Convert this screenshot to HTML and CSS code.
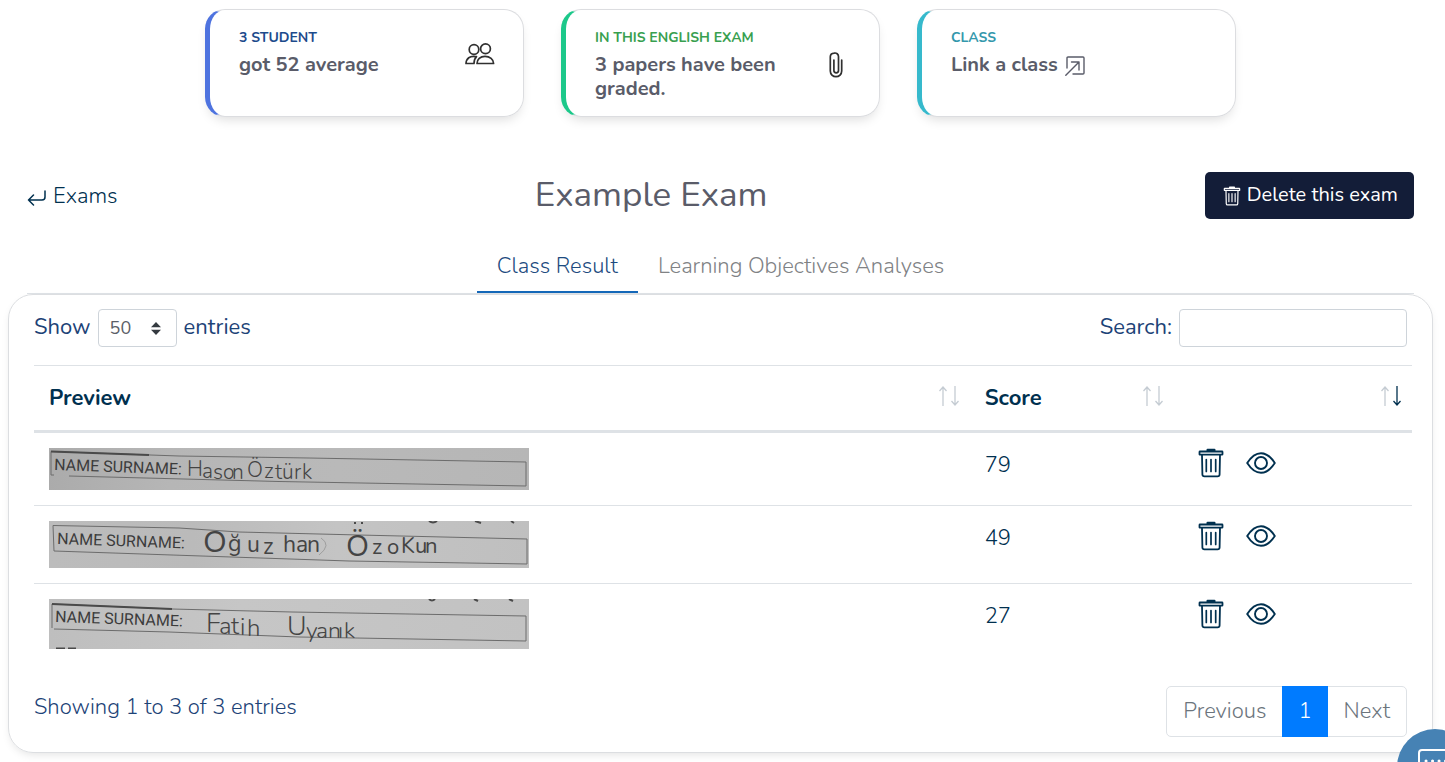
FILE: index.html
```html
<!DOCTYPE html>
<html lang="en">
<head>
<meta charset="utf-8">
<title>Example Exam</title>
<link rel="stylesheet" href="styles.css">
</head>
<body>
<svg class="defs" aria-hidden="true">
  <symbol id="trash" viewBox="0 0 26 30">
    <g fill="none" stroke="currentColor" stroke-width="1.8" stroke-linejoin="round" stroke-linecap="round">
      <path d="M9.500 2.800V1.800h7v1z" stroke-width="2"/>
      <rect x="1.500" y="3.500" width="23" height="3.200" rx=".5"/>
      <path d="M4 7l.4 19.500q.1 1.900 2 1.900h13.200q1.900 0 2-1.900L22 7"/>
      <path d="M8.300 11.500v12M13 11.500v12M17.700 11.500v12" stroke-width="1.700"/>
    </g>
  </symbol>
  <symbol id="eye" viewBox="0 0 30 22">
    <g fill="none" stroke="currentColor" stroke-width="1.900" stroke-linejoin="round">
      <path d="M1.200 11Q7.500 1.200 15 1.200T28.800 11Q22.500 20.800 15 20.800T1.200 11z"/>
      <circle cx="15" cy="11" r="6"/>
    </g>
  </symbol>
  <symbol id="up" viewBox="0 0 8 20">
    <path d="M4 20V1M0.500 5 4 1l3.500 4" fill="none" stroke="currentColor" stroke-width="1.300"/>
  </symbol>
  <symbol id="down" viewBox="0 0 8 20">
    <path d="M4 0v19M0.500 15 4 19l3.500-4" fill="none" stroke="currentColor" stroke-width="1.300"/>
  </symbol>
</svg>

<section class="stats">
  <article class="stat stat-blue">
    <div class="stat-text">
      <h2>3 STUDENT</h2>
      <p>got 52 average</p>
    </div>
    <svg class="icon-people" viewBox="0 0 30 22" fill="none" stroke="currentColor" stroke-width="1.700" stroke-linejoin="round">
      <circle cx="9" cy="6.500" r="4.800"/>
      <circle cx="20.500" cy="5.800" r="4.900"/>
      <path d="M12 20.500c0-4 3.200-7.200 8-7.200s8.600 3.200 8.600 7.200z"/>
      <path d="M10.500 13.600C5 12.600 1.200 15.500 1 20.500h8c0-2.800.5-4.900 2.500-6.900z"/>
    </svg>
  </article>
  <article class="stat stat-green">
    <div class="stat-text">
      <h2>IN THIS ENGLISH EXAM</h2>
      <p>3 papers have been graded.</p>
    </div>
    <svg class="icon-clip" viewBox="0 0 14 26" fill="none" stroke="currentColor" stroke-width="1.700" stroke-linecap="round">
      <path d="M9.500 8v10.500a2.300 2.300 0 0 1-4.600 0V8M9.500 8V4.500a3.500 3.500 0 0 0-4.300-3.400C2.700 1.300 1.300 2.500 1.300 4.800V19a5.700 5.700 0 0 0 11.400 0V8"/>
    </svg>
  </article>
  <article class="stat stat-teal">
    <div class="stat-text">
      <h2>CLASS</h2>
      <p>Link a class
        <svg class="icon-link" viewBox="0 0 20 20" fill="none" stroke="currentColor" stroke-width="1.400" stroke-linecap="round" stroke-linejoin="round">
          <path d="M2 12V2q0-1 1-1h15q1 0 1 1v15q0 1-1 1H8M.800 19.200 14 6M6.500 6H14v8"/>
        </svg>
      </p>
    </div>
  </article>
</section>

<header class="exam-head">
  <a class="back" href="#">
    <svg class="icon-back" viewBox="0 0 20 16" fill="none" stroke="currentColor" stroke-width="1.500" stroke-linecap="round" stroke-linejoin="round">
      <path d="M18 1v6q0 3-3 3H1.500M6.500 5l-5 5 5 5"/>
    </svg>
    Exams
  </a>
  <h1>Example Exam</h1>
  <button class="delete" type="button">
    <svg class="icon-delete"><use href="#trash"/></svg>
    Delete this exam
  </button>
</header>

<nav class="tabs">
  <a class="tab active" href="#">Class Result</a>
  <a class="tab" href="#">Learning Objectives Analyses</a>
</nav>

<main class="panel">
  <div class="tools">
    <label class="length"><span class="caption">Show</span>
      <span class="select">
        <select><option>50</option></select>
        <svg viewBox="0 0 10 13" fill="#343a40"><path d="M0 5.200 5 0l5 5.200zM0 7.800h10L5 13z"/></svg>
      </span>
      <span class="caption">entries</span>
    </label>
    <label class="search"><span class="caption">Search:</span> <input type="search"></label>
  </div>

  <table>
    <colgroup><col class="col-preview"><col class="col-score"><col class="col-actions"></colgroup>
    <thead>
      <tr>
        <th><div class="sort">Preview <span class="arrows"><svg><use href="#up"/></svg><svg><use href="#down"/></svg></span></div></th>
        <th><div class="sort">Score <span class="arrows"><svg><use href="#up"/></svg><svg><use href="#down"/></svg></span></div></th>
        <th><div class="sort"><span class="arrows"><svg><use href="#up"/></svg><svg class="on"><use href="#down"/></svg></span></div></th>
      </tr>
    </thead>
    <tbody>
      <tr>
        <td>
          <svg class="scan" viewBox="0 0 480 42" width="480" height="42">
            <defs><linearGradient id="paper1"><stop offset="0" stop-color="#ababab"/><stop offset=".25" stop-color="#b6b6b6"/><stop offset=".6" stop-color="#b9b9b9"/><stop offset="1" stop-color="#b6b6b6"/></linearGradient></defs>
            <rect width="480" height="42" fill="url(#paper1)"/>
            <path class="rule" d="M5 27 2 27V3.500L130 8l130 2 217 4v24L230 33.500 20 28"/>
            <path class="rule dark" d="M2 3.500 100 7"/>
            <text class="print" x="5" y="22" transform="rotate(2 5 22)">NAME SURNAME:</text>
            <text class="hand" font-size="21" x="138 153 164 174 183" y="28 30 31 31 31">Hason</text>
            <text class="hand" font-size="21" x="198 215 226 233 245 253" y="29 30 31 31 31 31">Öztürk</text>
          </svg>
        </td>
        <td>79</td>
        <td><div class="actions">
          <button type="button" aria-label="Delete"><svg class="icon-trash"><use href="#trash"/></svg></button>
          <button type="button" aria-label="View"><svg class="icon-eye"><use href="#eye"/></svg></button>
        </div></td>
      </tr>
      <tr>
        <td>
          <svg class="scan" viewBox="0 0 480 47" width="480" height="47">
            <defs><linearGradient id="paper2"><stop offset="0" stop-color="#bcbcbc"/><stop offset=".3" stop-color="#bababa"/><stop offset=".6" stop-color="#c4c4c4"/><stop offset="1" stop-color="#bfbfbf"/></linearGradient></defs>
            <rect width="480" height="47" fill="url(#paper2)"/>
            <path class="rule" d="M4 4.500 130 7l60 4 120 3 168 4v25L300 40 5 30z"/>
            <path class="rule dark" d="M306 1v2M313 1v2M380 0q4 3 8 0M426 0l6 2M462 0l3 2"/>
            <path class="faint" d="M272 17q11 7-2 17"/>
            <text class="print" x="8" y="23" transform="rotate(2 8 23)">NAME SURNAME:</text>
            <text class="hand bold" x="154 179 198 214 234 247 258" y="31 30 31 33 31 31 31"><tspan font-size="31">O</tspan><tspan font-size="23">ğuzhan</tspan></text>
            <text class="hand bold" x="297 323 338 352 366 376" y="35 33 33 32 32 32"><tspan font-size="30">Ö</tspan><tspan font-size="22">zoKun</tspan></text>
          </svg>
        </td>
        <td>49</td>
        <td><div class="actions">
          <button type="button" aria-label="Delete"><svg class="icon-trash"><use href="#trash"/></svg></button>
          <button type="button" aria-label="View"><svg class="icon-eye"><use href="#eye"/></svg></button>
        </div></td>
      </tr>
      <tr>
        <td>
          <svg class="scan" viewBox="0 0 480 50" width="480" height="50">
            <defs><linearGradient id="paper3"><stop offset="0" stop-color="#bebebe"/><stop offset=".4" stop-color="#c6c6c6"/><stop offset="1" stop-color="#c2c2c2"/></linearGradient></defs>
            <rect width="480" height="50" fill="url(#paper3)"/>
            <path class="rule" d="M3 29V5l120 5 120 3 234 4v25L250 38 120 33 5 30"/>
            <path class="rule dark" d="M3 5 123 10M7 49.500h9M19 49.500h8M380 0q3 3 6 0M425 0l4 2M460 0l4 2"/>
            <text class="print" x="6" y="23" transform="rotate(2 6 23)">NAME SURNAME:</text>
            <text class="hand" x="157 170 182 191 198" y="33 35 35 36 37"><tspan font-size="27">F</tspan><tspan font-size="24">atih</tspan></text>
            <text class="hand" x="238 257 267 279 289 295" y="36 39 39 39 39 39"><tspan font-size="27">U</tspan><tspan font-size="23">yanık</tspan></text>
          </svg>
        </td>
        <td>27</td>
        <td><div class="actions">
          <button type="button" aria-label="Delete"><svg class="icon-trash"><use href="#trash"/></svg></button>
          <button type="button" aria-label="View"><svg class="icon-eye"><use href="#eye"/></svg></button>
        </div></td>
      </tr>
    </tbody>
  </table>

  <footer class="foot">
    <p>Showing 1 to 3 of 3 entries</p>
    <nav class="pager">
      <a href="#">Previous</a>
      <a class="current" href="#">1</a>
      <a href="#">Next</a>
    </nav>
  </footer>
</main>

<button class="chat" type="button" aria-label="Chat">
  <svg viewBox="0 0 34 30" fill="none" stroke="#fff" stroke-width="2" stroke-linejoin="round" stroke-linecap="round">
    <path d="M4 1h26q3 0 3 3v16q0 3-3 3H18l-6 6v-6H4q-3 0-3-3V4q0-3 3-3z"/>
    <path d="M8 12h.1M14.500 12h.1M21 12h.1M27.500 12h.1" stroke-width="3"/>
  </svg>
</button>
</body>
</html>
```

FILE: styles.css
```css
* { box-sizing: border-box; }

body {
  margin: 0;
  padding: 9px 12px 9px 8px;
  background: #fff;
  color: #00304f;
  font-family: "Nunito", "Open Sans", sans-serif;
  font-size: 22px;
  font-weight: 300;
  line-height: 34px;
}

h1, h2, p { margin: 0; }
a { color: inherit; text-decoration: none; }
button { border: 0; padding: 0; background: none; color: inherit; font: inherit; }
svg { display: block; }
.defs { position: absolute; width: 0; height: 0; }

.stats {
  display: grid;
  grid-template-columns: repeat(3, 1fr);
  gap: 37px;
  width: 73%;
  max-width: 1031px;
  margin: 0 auto;
}

.stat {
  display: flex;
  justify-content: space-between;
  min-height: 108px;
  padding: 17px 28px 15px 29px;
  border: 1px solid #dcdde0;
  border-left-width: 5px;
  border-radius: 20px;
  box-shadow: 0 6px 12px -4px #00000026;
  color: #5a5c69;
}
.stat-blue { border-left-color: #4e73df; }
.stat-green { border-left-color: #1cc88a; }
.stat-teal { border-left-color: #36b9cc; }
.stat-text { max-width: 200px; }
.stat h2 { margin-bottom: 4px; font-size: 14px; font-weight: 700; line-height: 22px; }
.stat-blue h2 { color: #1d4b8c; }
.stat-green h2 { color: #38a04f; }
.stat-teal h2 { color: #3498ac; }
.stat p { display: flex; gap: 7px; font-size: 20px; font-weight: 700; line-height: 24px; }
.icon-people { width: 30px; height: 22px; margin-top: 16px; color: #303030; }
.icon-clip { width: 14px; height: 26px; margin: 25px 8px 0 0; color: #303030; }
.icon-link { width: 20px; height: 20px; margin-top: 3px; }

.exam-head {
  display: grid;
  grid-template-columns: 7fr 4fr 9fr;
  align-items: center;
  margin-top: 55px;
  padding: 0 19px;
}
.back { display: flex; align-items: center; gap: 6px; }
.icon-back { width: 20px; height: 16px; margin-top: 4px; }
h1 { padding-bottom: 2px; color: #5a5c69; font-size: 35px; font-weight: 400; line-height: 40px; text-align: center; white-space: nowrap; }
.delete {
  display: flex;
  align-items: center;
  justify-self: end;
  gap: 6px;
  height: 47px;
  padding: 0 16px 2px 18px;
  border-radius: 5px;
  background: #131d38;
  color: #fff;
  font-size: 20px;
  font-weight: 400;
}
.icon-delete { width: 18px; height: 20px; margin-top: 2px; }

.tabs {
  display: flex;
  justify-content: center;
  margin: 27px 19px 0;
  border-bottom: 1px solid #dee2e6;
}
.tab { padding: 3px 20px 8px; border-bottom: 2px solid transparent; color: #808285; }
.tab.active { border-bottom-color: #1467b8; color: #1d4b80; }

.panel {
  padding: 14px 20px 15px 25px;
  border: 1px solid #dcdee1;
  border-radius: 25px;
  box-shadow: 0 4px 10px -3px #00000020;
}

.tools { display: flex; justify-content: space-between; padding-right: 5px; color: #1d4377; font-weight: 400; }
.length, .search { display: flex; align-items: center; gap: 7px; }
.caption { padding-bottom: 3px; }
.select { position: relative; }
.select select, .search input {
  height: 38px;
  border: 1px solid #ced4da;
  border-radius: 4px;
  background: #fff;
  color: #5b6068;
  font: inherit;
  font-size: 18px;
}
.select select { display: block; width: 79px; padding: 0 11px; appearance: none; }
.select svg { position: absolute; top: 13px; right: 16px; width: 10px; height: 13px; pointer-events: none; }
.search input { width: 228px; }

table { width: 100%; margin-top: 18px; border-collapse: separate; border-spacing: 0; table-layout: fixed; }
.col-preview { width: 67.9%; }
.col-score { width: 14.8%; }
th { padding: 15px 11px 15px 15px; border-top: 1px solid #dee2e6; border-bottom: 3px solid #dee2e6; font-weight: 700; text-align: left; }
.sort { display: flex; align-items: center; justify-content: space-between; min-height: 34px; }
.arrows { display: flex; gap: 4px; margin-left: auto; padding-bottom: 4px; color: #c5ccd3; }
.arrows svg { width: 8px; height: 20px; }
.arrows .on { color: #00304f; }
td { padding: 15px; vertical-align: top; }
tbody tr + tr td { border-top: 1px solid #dee2e6; }

.scan { max-width: 100%; }
.rule { fill: none; stroke: #6c6c6c; stroke-width: 1; }
.dark { stroke: #4a4a4a; stroke-width: 2; }
.faint { fill: none; stroke: #9e9e9e; }
.print { fill: #3c3c3c; font: 400 16px Roboto, sans-serif; }
.hand { fill: #444; font-family: "Nunito", "Open Sans", sans-serif; font-weight: 300; }
.bold { font-weight: 400; }

.actions { display: flex; align-items: center; gap: 22px; padding-left: 9px; }
.icon-trash { width: 26px; height: 30px; }
.icon-eye { width: 30px; height: 22px; }

.foot { display: flex; justify-content: space-between; align-items: flex-start; margin-top: 22px; padding-right: 5px; color: #1d4377; }
.foot p { padding-top: 4px; }
.pager { display: flex; border: 1px solid #dee2e6; border-radius: 5px; color: #6c757d; }
.pager a { padding: 7px 16px 8px; }
.pager .current { margin: -1px 0; padding: 8px 16px 9px; background: #007bff; color: #fff; }

.chat {
  position: fixed;
  right: -28px;
  bottom: -43px;
  display: grid;
  place-items: center;
  width: 76px;
  height: 76px;
  border-radius: 50%;
  background: #4682b4;
}
.chat svg { width: 34px; height: 30px; margin-bottom: 6px; }
```
